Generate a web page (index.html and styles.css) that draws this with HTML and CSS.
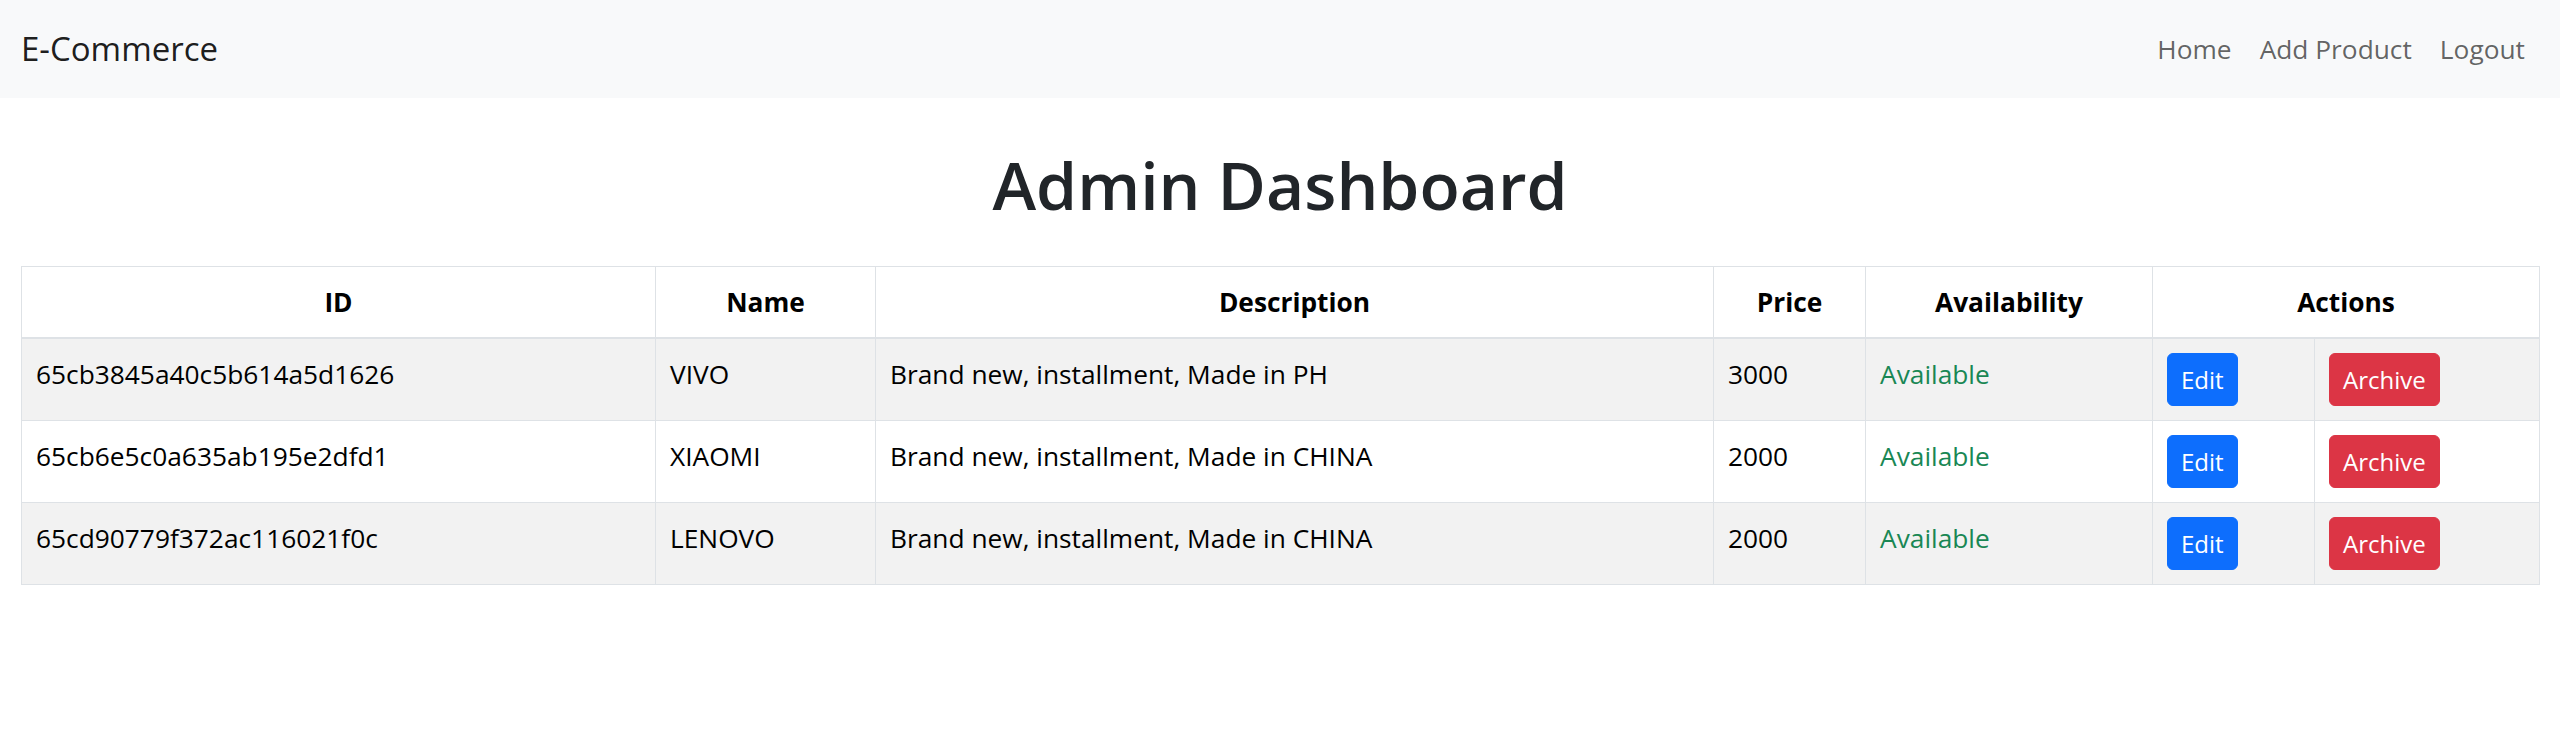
FILE: index.html
```html
<!DOCTYPE html>
<html lang="en">
<head>
<meta charset="utf-8">
<title>E-Commerce</title>
<link rel="stylesheet" href="styles.css">
</head>
<body>
<nav class="navbar">
  <a class="brand" href="#">E-Commerce</a>
  <div class="nav-links">
    <a class="nav-link" href="#">Home</a>
    <a class="nav-link" href="#">Add Product</a>
    <a class="nav-link" href="#">Logout</a>
  </div>
</nav>
<main class="content">
  <h1 class="title">Admin Dashboard</h1>
  <table class="products">
    <colgroup>
      <col class="c-id"><col class="c-name"><col class="c-desc"><col class="c-price"><col class="c-avail"><col class="c-edit"><col class="c-archive">
    </colgroup>
    <thead>
      <tr>
        <th>ID</th><th>Name</th><th>Description</th><th>Price</th><th>Availability</th><th colspan="2">Actions</th>
      </tr>
    </thead>
    <tbody>
      <tr>
        <td>65cb3845a40c5b614a5d1626</td><td>VIVO</td><td>Brand new, installment, Made in PH</td><td>3000</td><td class="ok">Available</td>
        <td><button class="btn btn-edit">Edit</button></td><td><button class="btn btn-archive">Archive</button></td>
      </tr>
      <tr>
        <td>65cb6e5c0a635ab195e2dfd1</td><td>XIAOMI</td><td>Brand new, installment, Made in CHINA</td><td>2000</td><td class="ok">Available</td>
        <td><button class="btn btn-edit">Edit</button></td><td><button class="btn btn-archive">Archive</button></td>
      </tr>
      <tr>
        <td>65cd90779f372ac116021f0c</td><td>LENOVO</td><td>Brand new, installment, Made in CHINA</td><td>2000</td><td class="ok">Available</td>
        <td><button class="btn btn-edit">Edit</button></td><td><button class="btn btn-archive">Archive</button></td>
      </tr>
    </tbody>
  </table>
</main>
</body>
</html>
```
FILE: styles.css
```css
* { box-sizing: border-box; }
body {
  margin: 0;
  font-family: "Open Sans", "Noto Sans", sans-serif;
  font-size: 26.3px;
  line-height: 42px;
  color: #212529;
  background: #fff;
}
.navbar {
  height: 98px;
  background: #f8f9fa;
  display: flex;
  align-items: center;
  justify-content: space-between;
  padding: 0 21px;
}
.brand {
  font-size: 33px;
  color: rgba(0,0,0,.9);
  text-decoration: none;
  line-height: 52px;
}
.nav-links { display: flex; }
.nav-link {
  color: rgba(0,0,0,.62);
  text-decoration: none;
  padding: 0 14px;
}
.content { padding: 0 21px; }
.title {
  margin: 44px 0 40px;
  text-align: center;
  font-size: 66px;
  font-weight: 600;
  line-height: 84px;
}
.products {
  width: 2518px;
  table-layout: fixed;
  border-collapse: collapse;
  vertical-align: top;
}
.c-id { width: 634px; }
.c-name { width: 220px; }
.c-desc { width: 838px; }
.c-price { width: 152px; }
.c-avail { width: 287px; }
.c-edit { width: 162px; }
.c-archive { width: 225px; }
.products th, .products td {
  border: 1px solid #dee2e6;
  padding: 14px 14px;
  white-space: nowrap;
}
.products th { text-align: center; font-weight: 700; color: #000; }
.products td { text-align: left; color: #000; vertical-align: top; }
.products thead th { border-bottom: 2px solid #dee2e6; }
.products tbody tr:nth-child(odd) td { background: #f2f2f2; }
.products td.ok { color: #198754; }
.btn {
  font-family: inherit;
  font-size: 24px;
  line-height: 37px;
  padding: 7px 13px;
  border: 1px solid transparent;
  border-radius: 6px;
  color: #fff;
  cursor: pointer;
}
.btn-edit { background: #0d6efd; border-color: #0d6efd; }
.btn-archive { background: #dc3545; border-color: #dc3545; }
```
